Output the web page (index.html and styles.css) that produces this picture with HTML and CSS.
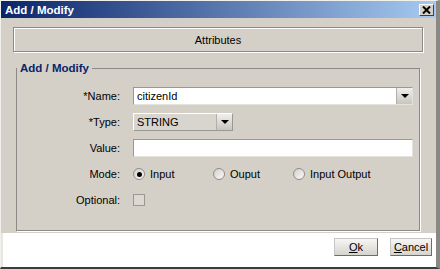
FILE: index.html
```html
<!DOCTYPE html>
<html lang="en">
<head>
    <meta charset="UTF-8">
    <title>Add / Modify</title>
    <link rel="stylesheet" href="styles.css">
</head>
<body>
    <div class="window">
        <div class="titlebar">
            <span class="title">Add / Modify</span>
            <span class="close-btn">
                <svg width="9" height="8" viewBox="0 0 9 8">
                    <path d="M1 0.5 L8 7.5 M8 0.5 L1 7.5" stroke="#000" stroke-width="2"/>
                </svg>
            </span>
        </div>

        <div class="content">
            <div class="tab-header">Attributes</div>

            <fieldset class="group">
                <legend>Add / Modify</legend>
                <div class="form">
                    <label class="form-label">*Name:</label>
                    <div class="combo combo-wide">
                        <span class="combo-text">citizenId</span>
                        <span class="combo-arrow"><span class="triangle"></span></span>
                    </div>

                    <label class="form-label">*Type:</label>
                    <div class="combo combo-select">
                        <span class="combo-text">STRING</span>
                        <span class="combo-arrow"><span class="triangle"></span></span>
                    </div>

                    <label class="form-label">Value:</label>
                    <div class="text-field"></div>

                    <label class="form-label">Mode:</label>
                    <div class="radio-group">
                        <span class="radio"><span class="radio-dot checked"></span>Input</span>
                        <span class="radio"><span class="radio-dot"></span>Ouput</span>
                        <span class="radio"><span class="radio-dot"></span>Input Output</span>
                    </div>

                    <label class="form-label">Optional:</label>
                    <div class="check-cell"><span class="checkbox"></span></div>
                </div>
            </fieldset>
        </div>

        <div class="footer">
            <button class="btn btn-ok"><u>O</u>k</button>
            <button class="btn btn-cancel"><u>C</u>ancel</button>
        </div>
    </div>
</body>
</html>
```

FILE: styles.css
```css
body {
    margin: 0;
    font-family: "Liberation Sans", Arial, sans-serif;
    font-size: 11px;
    color: #000;
}

.window {
    width: 440px;
    height: 269px;
    box-sizing: border-box;
    background: #d4d0c8;
    border-top: 1px solid #f2f0ec;
    border-left: 1px solid #f2f0ec;
    border-right: 4px solid #8a8884;
    border-bottom: 2px solid #3c3c3c;
    box-shadow: inset -1px 0 #d4d0c8;
    display: flex;
    flex-direction: column;
}

.titlebar {
    height: 17px;
    flex-shrink: 0;
    background: linear-gradient(to right, #0a246a, #a6caf0);
    display: flex;
    align-items: center;
    justify-content: space-between;
    padding: 0 2px 0 4px;
}

.title {
    color: #fff;
    font-weight: bold;
    font-size: 11.5px;
}

.close-btn {
    width: 15px;
    height: 12px;
    box-sizing: border-box;
    background: #d4d0c8;
    border: 1px solid;
    border-color: #fff #404040 #404040 #fff;
    display: flex;
    align-items: center;
    justify-content: center;
}

.content {
    flex: 1;
    min-height: 0;
    padding: 9px 13px 0 12px;
}

.tab-header {
    height: 25px;
    box-sizing: border-box;
    border: 1px solid #8c8a86;
    box-shadow: inset 1px 1px #fff, 1px 1px #fff;
    display: flex;
    align-items: center;
    justify-content: center;
}

.group {
    margin: 10px 3px 0;
    padding: 12px 0 21px;
    border: 1px solid #8c8a86;
    box-shadow: 1px 1px #fff;
}

.group legend {
    padding: 0 3px;
    font-weight: bold;
    font-size: 11.5px;
    line-height: 13px;
    color: #0a246a;
}

.form {
    display: grid;
    grid-template-columns: 103px 1fr;
    column-gap: 13px;
    row-gap: 8px;
    align-items: center;
}

.form-label {
    text-align: right;
}

.combo {
    height: 18px;
    box-sizing: border-box;
    display: flex;
    border: 1px solid;
    border-color: #9a9892 #e4e2dc #e4e2dc #9a9892;
}

.combo-wide {
    width: 280px;
    background: #fff;
}

.combo-select {
    width: 100px;
    background: #d8d5ce;
    border-color: #fff #9a9892 #9a9892 #fff;
}

.combo-text {
    flex: 1;
    padding-left: 3px;
    line-height: 16px;
}

.combo-arrow {
    width: 15px;
    background: linear-gradient(#f0efec, #c8c5be);
    border-left: 1px solid #b0aea8;
    display: flex;
    align-items: center;
    justify-content: center;
}

.triangle {
    width: 0;
    height: 0;
    border-left: 4px solid transparent;
    border-right: 4px solid transparent;
    border-top: 4px solid #000;
}

.text-field {
    width: 280px;
    height: 18px;
    box-sizing: border-box;
    background: #fff;
    border: 1px solid;
    border-color: #9a9892 #e4e2dc #e4e2dc #9a9892;
}

.radio-group {
    display: flex;
    height: 18px;
    align-items: center;
}

.radio {
    width: 80px;
    display: flex;
    align-items: center;
    gap: 5px;
}

.radio-dot {
    width: 12px;
    height: 12px;
    box-sizing: border-box;
    border-radius: 50%;
    border: 1px solid #8e8c88;
    background: linear-gradient(135deg, #d0cec8, #fbfbfa);
    display: flex;
    align-items: center;
    justify-content: center;
}

.radio-dot.checked::after {
    content: "";
    width: 5px;
    height: 5px;
    border-radius: 50%;
    background: #000;
}

.check-cell {
    height: 18px;
    display: flex;
    align-items: center;
}

.checkbox {
    width: 12px;
    height: 12px;
    box-sizing: border-box;
    border: 1px solid #9a9892;
    background: #dcd9d2;
}

.footer {
    height: 34px;
    flex-shrink: 0;
    box-sizing: border-box;
    background: #fff;
    border-left: 2px solid #e8e6e2;
    display: flex;
    justify-content: flex-end;
    align-items: flex-start;
    gap: 12px;
    padding: 5px 4px 0 0;
}

.btn {
    height: 18px;
    padding: 0;
    font-family: "Liberation Sans", Arial, sans-serif;
    font-size: 11px;
    color: #000;
    border: 1px solid;
    border-color: #c8c6c2 #6e6c68 #6e6c68 #c8c6c2;
    background: linear-gradient(#f6f6f4, #d6d4ce);
}

.btn-ok {
    width: 44px;
}

.btn-cancel {
    width: 42px;
}
```
